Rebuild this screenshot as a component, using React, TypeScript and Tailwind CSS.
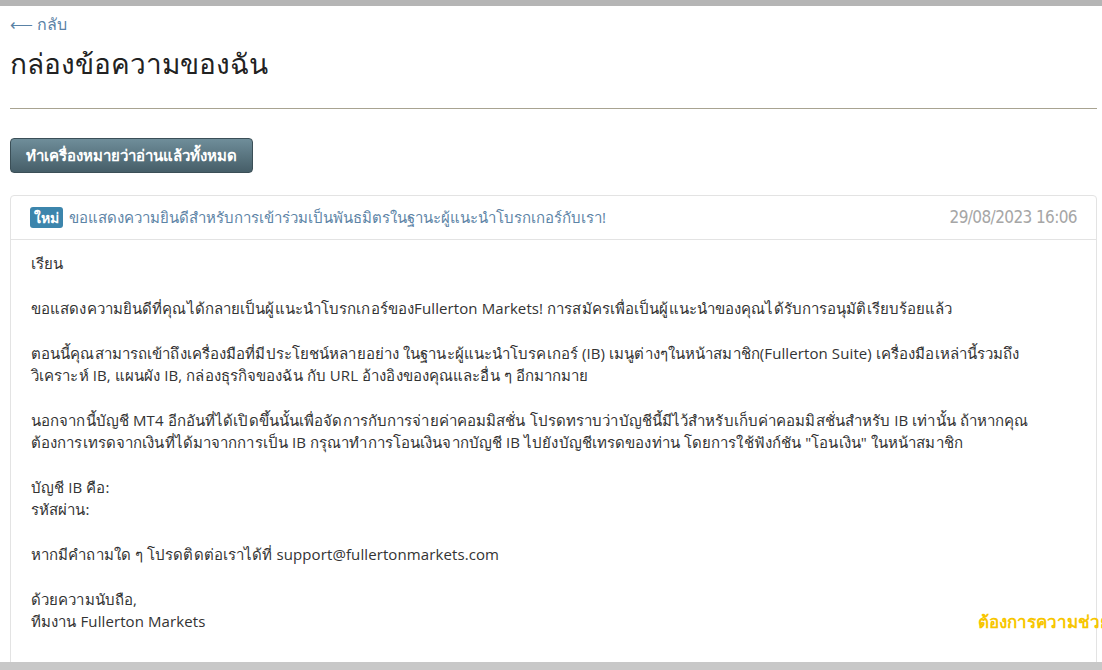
import React from 'react';

const font = { fontFamily: '"Open Sans", "Liberation Sans", "Noto Sans", Tahoma, sans-serif' };

const paragraphs: string[][] = [
  ['เรียน'],
  ['ขอแสดงความยินดีที่คุณได้กลายเป็นผู้แนะนำโบรกเกอร์ของFullerton Markets! การสมัครเพื่อเป็นผู้แนะนำของคุณได้รับการอนุมัติเรียบร้อยแล้ว'],
  [
    'ตอนนี้คุณสามารถเข้าถึงเครื่องมือที่มีประโยชน์หลายอย่าง ในฐานะผู้แนะนำโบรคเกอร์ (IB) เมนูต่างๆในหน้าสมาชิก(Fullerton Suite) เครื่องมือเหล่านี้รวมถึง',
    'วิเคราะห์ IB, แผนผัง IB, กล่องธุรกิจของฉัน กับ URL อ้างอิงของคุณและอื่น ๆ อีกมากมาย',
  ],
  [
    'นอกจากนี้บัญชี MT4 อีกอันที่ได้เปิดขึ้นนั้นเพื่อจัดการกับการจ่ายค่าคอมมิสชั่น  โปรดทราบว่าบัญชีนี้มีไว้สำหรับเก็บค่าคอมมิสชั่นสำหรับ IB เท่านั้น ถ้าหากคุณ',
    'ต้องการเทรดจากเงินที่ได้มาจากการเป็น IB กรุณาทำการโอนเงินจากบัญชี IB ไปยังบัญชีเทรดของท่าน โดยการใช้ฟังก์ชัน "โอนเงิน" ในหน้าสมาชิก',
  ],
  ['บัญชี IB คือ:', 'รหัสผ่าน:'],
  ['หากมีคำถามใด ๆ โปรดติดต่อเราได้ที่ support@fullertonmarkets.com'],
  ['ด้วยความนับถือ,', 'ทีมงาน Fullerton Markets'],
];

export default function App() {
  return (
    <div className="relative h-[670px] w-[1102px] overflow-hidden bg-white text-[#333]" style={font}>
      <div className="h-[6px] bg-[#b5b5b5]" />
      <div className="px-[10px] pr-[5px]">
        <a className="mt-[8px] block text-[16px] leading-[20px] text-[#5a82a6]">⟵ กลับ</a>
        <h1 className="mt-[11px] text-[28px] leading-[36px] text-[#222]">กล่องข้อความของฉัน</h1>
        <hr className="mt-[27px] border-t border-[#a8a391]" />
        <button className="mt-[29px] h-[35px] rounded-[4px] border border-[#3b4f57] bg-gradient-to-b from-[#6f8e9a] to-[#465e68] px-[15px] text-[15px] font-bold text-white">
          ทำเครื่องหมายว่าอ่านแล้วทั้งหมด
        </button>
        <div className="mt-[22px] rounded-[4px] border border-[#e3e3e3]">
          <div className="flex h-[44px] items-center justify-between border-b border-[#e3e3e3] px-[19px]">
            <div className="flex items-center gap-[6px]">
              <span className="rounded-[3px] bg-[#3c85ac] px-[4px] text-[14px] font-bold leading-[21px] text-white">ใหม่</span>
              <span className="text-[15px] text-[#5d84a6]">ขอแสดงความยินดีสำหรับการเข้าร่วมเป็นพันธมิตรในฐานะผู้แนะนำโบรกเกอร์กับเรา!</span>
            </div>
            <span className="text-[17px] tracking-[-0.6px] text-[#a6a6a6]" style={{ fontFamily: '"Liberation Sans Narrow", "DejaVu Sans Condensed", sans-serif' }}>
              29/08/2023 16:06
            </span>
          </div>
          <div className="px-[20px] pb-[40px] pt-[12px] text-[15px] leading-[22.4px] tracking-[0.1px] text-[#333]">
            {paragraphs.map((p, i) => (
              <p key={i} className="mb-[22.4px]">
                {p.map((line, j) => (
                  <span key={j} className="block whitespace-nowrap">{line}</span>
                ))}
              </p>
            ))}
          </div>
        </div>
      </div>
      <div className="absolute left-[978px] top-[609px] whitespace-nowrap text-[17px] font-bold text-[#f7c600]">
        ต้องการความช่วยเหลือ
      </div>
      <div className="absolute bottom-0 left-0 h-[8px] w-full bg-[#c8c8c8]" />
    </div>
  );
}
